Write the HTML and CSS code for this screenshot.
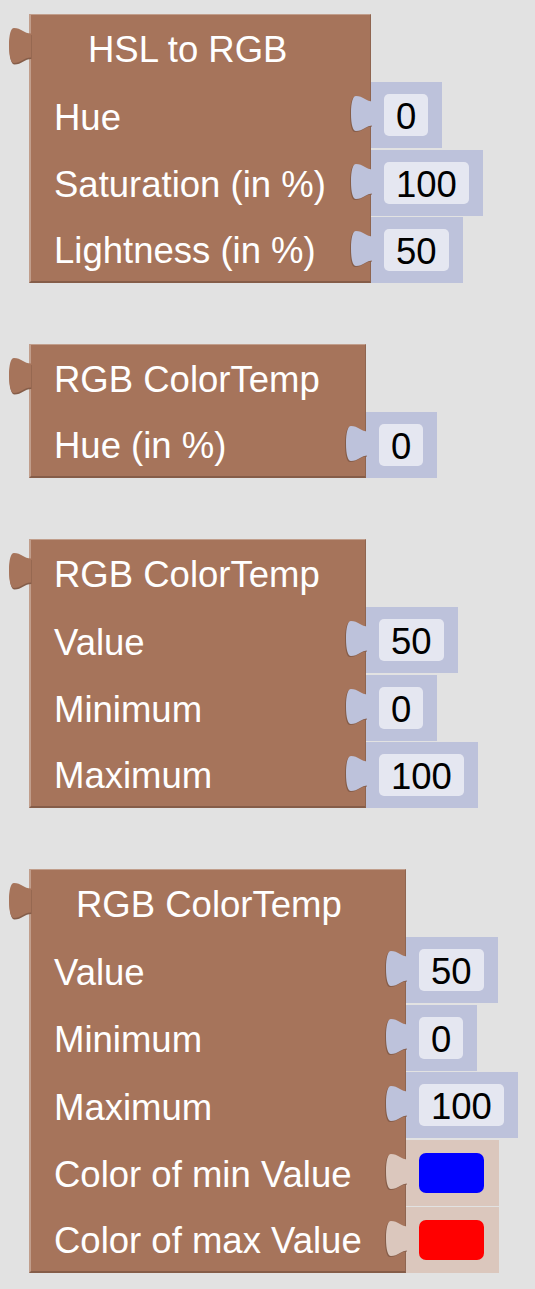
FILE: index.html
```html
<!DOCTYPE html>
<html lang="en">
<head>
<meta charset="utf-8">
<title>Blocks</title>
<link rel="stylesheet" href="styles.css">
</head>
<body>
<div class="ws">

  <div class="block b1">
    <svg class="tab out" viewBox="0 0 23 35"><path class="sh" d="M23,5.5 C16,5.5 13,0 6,0 C3,0 1,6 1,17.5 C1,29 3,35 6,35 C13,35 16,29.5 23,29.5 Z"/><path class="fg" d="M23,5.5 C16,5.5 13,0 6,0 C3,0 1,6 1,17.5 C1,29 3,35 6,35 C13,35 16,29.5 23,29.5 Z"/></svg>
    <div class="row title"><div class="cell t-hsl">HSL to RGB</div></div>
    <div class="row"><div class="cell">Hue</div>
      <div class="val num"><svg class="tab knob" viewBox="0 0 23 35"><path class="sh" d="M23,5.5 C16,5.5 13,0 6,0 C3,0 1,6 1,17.5 C1,29 3,35 6,35 C13,35 16,29.5 23,29.5 Z"/><path class="fg" d="M23,5.5 C16,5.5 13,0 6,0 C3,0 1,6 1,17.5 C1,29 3,35 6,35 C13,35 16,29.5 23,29.5 Z"/></svg><span class="field">0</span></div></div>
    <div class="row"><div class="cell">Saturation (in %)</div>
      <div class="val num"><svg class="tab knob" viewBox="0 0 23 35"><path class="sh" d="M23,5.5 C16,5.5 13,0 6,0 C3,0 1,6 1,17.5 C1,29 3,35 6,35 C13,35 16,29.5 23,29.5 Z"/><path class="fg" d="M23,5.5 C16,5.5 13,0 6,0 C3,0 1,6 1,17.5 C1,29 3,35 6,35 C13,35 16,29.5 23,29.5 Z"/></svg><span class="field">100</span></div></div>
    <div class="row last"><div class="cell">Lightness (in %)</div>
      <div class="val num"><svg class="tab knob" viewBox="0 0 23 35"><path class="sh" d="M23,5.5 C16,5.5 13,0 6,0 C3,0 1,6 1,17.5 C1,29 3,35 6,35 C13,35 16,29.5 23,29.5 Z"/><path class="fg" d="M23,5.5 C16,5.5 13,0 6,0 C3,0 1,6 1,17.5 C1,29 3,35 6,35 C13,35 16,29.5 23,29.5 Z"/></svg><span class="field">50</span></div></div>
  </div>

  <div class="block b2">
    <svg class="tab out" viewBox="0 0 23 35"><path class="sh" d="M23,5.5 C16,5.5 13,0 6,0 C3,0 1,6 1,17.5 C1,29 3,35 6,35 C13,35 16,29.5 23,29.5 Z"/><path class="fg" d="M23,5.5 C16,5.5 13,0 6,0 C3,0 1,6 1,17.5 C1,29 3,35 6,35 C13,35 16,29.5 23,29.5 Z"/></svg>
    <div class="row title"><div class="cell">RGB ColorTemp</div></div>
    <div class="row last"><div class="cell">Hue (in %)</div>
      <div class="val num"><svg class="tab knob" viewBox="0 0 23 35"><path class="sh" d="M23,5.5 C16,5.5 13,0 6,0 C3,0 1,6 1,17.5 C1,29 3,35 6,35 C13,35 16,29.5 23,29.5 Z"/><path class="fg" d="M23,5.5 C16,5.5 13,0 6,0 C3,0 1,6 1,17.5 C1,29 3,35 6,35 C13,35 16,29.5 23,29.5 Z"/></svg><span class="field">0</span></div></div>
  </div>

  <div class="block b3">
    <svg class="tab out" viewBox="0 0 23 35"><path class="sh" d="M23,5.5 C16,5.5 13,0 6,0 C3,0 1,6 1,17.5 C1,29 3,35 6,35 C13,35 16,29.5 23,29.5 Z"/><path class="fg" d="M23,5.5 C16,5.5 13,0 6,0 C3,0 1,6 1,17.5 C1,29 3,35 6,35 C13,35 16,29.5 23,29.5 Z"/></svg>
    <div class="row title"><div class="cell">RGB ColorTemp</div></div>
    <div class="row"><div class="cell">Value</div>
      <div class="val num"><svg class="tab knob" viewBox="0 0 23 35"><path class="sh" d="M23,5.5 C16,5.5 13,0 6,0 C3,0 1,6 1,17.5 C1,29 3,35 6,35 C13,35 16,29.5 23,29.5 Z"/><path class="fg" d="M23,5.5 C16,5.5 13,0 6,0 C3,0 1,6 1,17.5 C1,29 3,35 6,35 C13,35 16,29.5 23,29.5 Z"/></svg><span class="field">50</span></div></div>
    <div class="row"><div class="cell">Minimum</div>
      <div class="val num"><svg class="tab knob" viewBox="0 0 23 35"><path class="sh" d="M23,5.5 C16,5.5 13,0 6,0 C3,0 1,6 1,17.5 C1,29 3,35 6,35 C13,35 16,29.5 23,29.5 Z"/><path class="fg" d="M23,5.5 C16,5.5 13,0 6,0 C3,0 1,6 1,17.5 C1,29 3,35 6,35 C13,35 16,29.5 23,29.5 Z"/></svg><span class="field">0</span></div></div>
    <div class="row last"><div class="cell">Maximum</div>
      <div class="val num"><svg class="tab knob" viewBox="0 0 23 35"><path class="sh" d="M23,5.5 C16,5.5 13,0 6,0 C3,0 1,6 1,17.5 C1,29 3,35 6,35 C13,35 16,29.5 23,29.5 Z"/><path class="fg" d="M23,5.5 C16,5.5 13,0 6,0 C3,0 1,6 1,17.5 C1,29 3,35 6,35 C13,35 16,29.5 23,29.5 Z"/></svg><span class="field">100</span></div></div>
  </div>

  <div class="block b4">
    <svg class="tab out" viewBox="0 0 23 35"><path class="sh" d="M23,5.5 C16,5.5 13,0 6,0 C3,0 1,6 1,17.5 C1,29 3,35 6,35 C13,35 16,29.5 23,29.5 Z"/><path class="fg" d="M23,5.5 C16,5.5 13,0 6,0 C3,0 1,6 1,17.5 C1,29 3,35 6,35 C13,35 16,29.5 23,29.5 Z"/></svg>
    <div class="row title"><div class="cell t-wide">RGB ColorTemp</div></div>
    <div class="row"><div class="cell">Value</div>
      <div class="val num"><svg class="tab knob" viewBox="0 0 23 35"><path class="sh" d="M23,5.5 C16,5.5 13,0 6,0 C3,0 1,6 1,17.5 C1,29 3,35 6,35 C13,35 16,29.5 23,29.5 Z"/><path class="fg" d="M23,5.5 C16,5.5 13,0 6,0 C3,0 1,6 1,17.5 C1,29 3,35 6,35 C13,35 16,29.5 23,29.5 Z"/></svg><span class="field">50</span></div></div>
    <div class="row"><div class="cell">Minimum</div>
      <div class="val num"><svg class="tab knob" viewBox="0 0 23 35"><path class="sh" d="M23,5.5 C16,5.5 13,0 6,0 C3,0 1,6 1,17.5 C1,29 3,35 6,35 C13,35 16,29.5 23,29.5 Z"/><path class="fg" d="M23,5.5 C16,5.5 13,0 6,0 C3,0 1,6 1,17.5 C1,29 3,35 6,35 C13,35 16,29.5 23,29.5 Z"/></svg><span class="field">0</span></div></div>
    <div class="row"><div class="cell">Maximum</div>
      <div class="val num"><svg class="tab knob" viewBox="0 0 23 35"><path class="sh" d="M23,5.5 C16,5.5 13,0 6,0 C3,0 1,6 1,17.5 C1,29 3,35 6,35 C13,35 16,29.5 23,29.5 Z"/><path class="fg" d="M23,5.5 C16,5.5 13,0 6,0 C3,0 1,6 1,17.5 C1,29 3,35 6,35 C13,35 16,29.5 23,29.5 Z"/></svg><span class="field">100</span></div></div>
    <div class="row"><div class="cell">Color of min Value</div>
      <div class="val col"><svg class="tab knob" viewBox="0 0 23 35"><path class="sh" d="M23,5.5 C16,5.5 13,0 6,0 C3,0 1,6 1,17.5 C1,29 3,35 6,35 C13,35 16,29.5 23,29.5 Z"/><path class="fg" d="M23,5.5 C16,5.5 13,0 6,0 C3,0 1,6 1,17.5 C1,29 3,35 6,35 C13,35 16,29.5 23,29.5 Z"/></svg><span class="swatch blue"></span></div></div>
    <div class="row last"><div class="cell">Color of max Value</div>
      <div class="val col"><svg class="tab knob" viewBox="0 0 23 35"><path class="sh" d="M23,5.5 C16,5.5 13,0 6,0 C3,0 1,6 1,17.5 C1,29 3,35 6,35 C13,35 16,29.5 23,29.5 Z"/><path class="fg" d="M23,5.5 C16,5.5 13,0 6,0 C3,0 1,6 1,17.5 C1,29 3,35 6,35 C13,35 16,29.5 23,29.5 Z"/></svg><span class="swatch red"></span></div></div>
  </div>

</div>
</body>
</html>
```

FILE: styles.css
```css
html, body {
  margin: 0;
  padding: 0;
  background: #e2e2e2;
}

.ws {
  display: flex;
  flex-direction: column;
  align-items: flex-start;
  gap: 61px;
  padding: 14px 0 20px 29px;
  font-family: "Liberation Sans", Arial, sans-serif;
}

.block {
  position: relative;
  display: flex;
  flex-direction: column;
}

.b1 { --w: 342px; }
.b2 { --w: 337px; }
.b3 { --w: 337px; }
.b4 { --w: 377px; }

.row {
  display: flex;
  height: 67.5px;
}
.row.title { height: 68px; }
.row.last { height: 66px; }

.cell {
  box-sizing: border-box;
  width: var(--w);
  flex: none;
  display: flex;
  align-items: center;
  padding: 4px 0 0 23px;
  background: #a6745b;
  border-left: 2px solid #c19e8c;
  border-right: 1px solid #8f6550;
  color: #fff;
  font-size: 36.5px;
  line-height: 36px;
  white-space: nowrap;
}
.title .cell {
  border-top: 1.5px solid #c19e8c;
  padding-top: 2px;
}
.last .cell {
  border-bottom: 2px solid #855d49;
}
.cell.t-hsl { padding-left: 57px; }
.cell.t-wide { padding-left: 45px; }

.val {
  position: relative;
  box-sizing: border-box;
  height: 66px;
  display: flex;
  align-items: center;
  padding: 0 14px 0 13px;
}
.val.num { background: #bdc2db; }
.val.col { background: #dbc7bd; padding-right: 15px; }

.field {
  box-sizing: border-box;
  height: 42px;
  padding: 4px 12px 0;
  border-radius: 5px;
  background: #e5e7f1;
  color: #000;
  font-size: 36.5px;
  line-height: 38px;
}

.swatch {
  display: block;
  width: 65px;
  height: 40px;
  border-radius: 7px;
}
.swatch.blue { background: #0000ff; }
.swatch.red { background: #ff0000; }

.tab {
  position: absolute;
  width: 23px;
  height: 35px;
  top: 14px;
  overflow: visible;
}
.tab.out { left: -21px; }
.tab.knob { left: -21px; }

.out .sh { fill: #855d49; transform: translate(0.5px, 1.5px); }
.out .fg { fill: #a6745b; }
.knob .sh { fill: #855d49; transform: translate(-1px, 1px); }
.num .knob .fg { fill: #bdc2db; }
.col .knob .fg { fill: #dbc7bd; }
```
